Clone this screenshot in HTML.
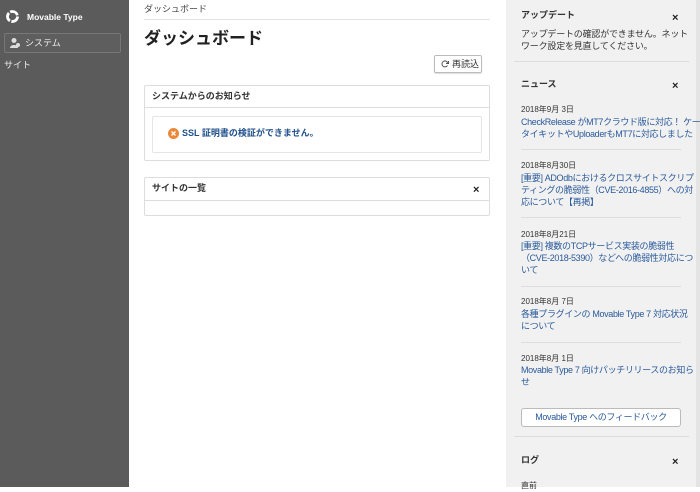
<!DOCTYPE html><html><head><meta charset="utf-8"><style>
*{margin:0;padding:0;box-sizing:border-box}
body{width:700px;height:487px;overflow:hidden;position:relative;background:#fff;font-family:"Liberation Sans","Noto Sans CJK JP",sans-serif;font-size:9px;color:#333}
.a{position:absolute;white-space:nowrap;line-height:12px}
.ln{position:absolute;height:1px;background:#ddd}
.lk{color:#2a5a9a;letter-spacing:-0.35px}
.x{font-weight:bold;font-size:11px;color:#222}
</style></head><body>
<div style="position:absolute;left:0;top:0;width:129px;height:487px;background:#5b5b5b"></div>
<svg style="position:absolute;left:5px;top:9px" width="15" height="15" viewBox="0 0 15 15"><circle cx="7.5" cy="7.5" r="5" fill="none" stroke="#fff" stroke-width="2.8" stroke-dasharray="9 1.5"/></svg>
<div class="a" style="left:27px;top:11px;color:#fff;font-weight:bold;font-size:8.5px">Movable Type</div>
<div style="position:absolute;left:4px;top:33px;width:117px;height:20px;border:1px solid #777;border-radius:2px;background:#5e5e5e"></div>
<svg style="position:absolute;left:9px;top:37px" width="12" height="12" viewBox="0 0 12 12"><circle cx="5" cy="3.5" r="2.5" fill="#ddd"/><path d="M1 11c0-4 8-4 8 0z" fill="#ddd"/><circle cx="9" cy="8" r="2" fill="#ddd"/></svg>
<div class="a" style="left:25px;top:37px;color:#eee">システム</div>
<div class="a" style="left:4px;top:59px;color:#eee">サイト</div>

<div class="a" style="left:144px;top:3px;color:#444">ダッシュボード</div>
<div class="ln" style="left:144px;top:19px;width:346px;background:#e3e3e3"></div>
<div class="a" style="left:144px;top:28px;font-size:17px;line-height:22px;font-weight:bold;color:#222">ダッシュボード</div>
<div style="position:absolute;left:434px;top:55px;width:48px;height:18px;border:1px solid #bbb;border-radius:2px;box-shadow:0 1px 1px #ddd"></div>
<svg style="position:absolute;left:441px;top:60px" width="8" height="8" viewBox="0 0 8 8"><path d="M6.8 3A3 3 0 1 0 6.5 5.5" fill="none" stroke="#555" stroke-width="1"/><path d="M7.5 1v2.5H5" fill="none" stroke="#555" stroke-width="1"/></svg>
<div class="a" style="left:452px;top:58px">再読込</div>

<div style="position:absolute;left:144px;top:85px;width:346px;height:76px;border:1px solid #ddd;border-radius:2px"></div>
<div class="ln" style="left:145px;top:107px;width:344px"></div>
<div class="a" style="left:152px;top:90px;font-weight:bold">システムからのお知らせ</div>
<div style="position:absolute;left:152px;top:116px;width:330px;height:37px;border:1px solid #e5e5e5;border-radius:2px"></div>
<svg style="position:absolute;left:168px;top:128px" width="11" height="11" viewBox="0 0 11 11"><circle cx="5.5" cy="5.5" r="5.5" fill="#e98a3a"/><path d="M3.5 3.5l4 4M7.5 3.5l-4 4" stroke="#fff" stroke-width="1.3"/></svg>
<div class="a" style="left:182px;top:127px;color:#1f4f8a;font-weight:bold">SSL 証明書の検証ができません。</div>

<div style="position:absolute;left:144px;top:177px;width:346px;height:39px;border:1px solid #ddd;border-radius:2px"></div>
<div class="ln" style="left:145px;top:200px;width:344px"></div>
<div class="a" style="left:152px;top:182px;font-weight:bold">サイトの一覧</div>
<div class="a x" style="left:473px;top:184px">×</div>

<div style="position:absolute;left:506px;top:0;width:194px;height:487px;background:#f1f1f1"></div>
<div style="position:absolute;left:696px;top:0;width:4px;height:487px;background:#e4e4e4"></div>
<div class="a" style="left:521px;top:9px;font-weight:bold">アップデート</div>
<div class="a x" style="left:672px;top:12px">×</div>
<div class="a" style="left:521px;top:28px;line-height:12px;letter-spacing:-0.2px">アップデートの確認ができません。ネット<br>ワーク設定を見直してください。</div>
<div class="ln" style="left:514px;top:61px;width:175px"></div>
<div class="a" style="left:521px;top:78px;font-weight:bold">ニュース</div>
<div class="a x" style="left:672px;top:80px">×</div>

<div class="a" style="left:521px;top:104px;font-size:8px">2018年9月 3日</div>
<div class="a lk" style="left:521px;top:116px">CheckRelease がMT7クラウド版に対応！ ケー<br>タイキットやUploaderもMT7に対応しました</div>
<div class="ln" style="left:521px;top:149px;width:160px"></div>
<div class="a" style="left:521px;top:160px;font-size:8px">2018年8月30日</div>
<div class="a lk" style="left:521px;top:172px">[重要] ADOdbにおけるクロスサイトスクリプ<br>ティングの脆弱性（CVE-2016-4855）への対<br>応について【再掲】</div>
<div class="ln" style="left:521px;top:217px;width:160px"></div>
<div class="a" style="left:521px;top:229px;font-size:8px">2018年8月21日</div>
<div class="a lk" style="left:521px;top:240px">[重要] 複数のTCPサービス実装の脆弱性<br>（CVE-2018-5390）などへの脆弱性対応につ<br>いて</div>
<div class="ln" style="left:521px;top:286px;width:160px"></div>
<div class="a" style="left:521px;top:296px;font-size:8px">2018年8月 7日</div>
<div class="a lk" style="left:521px;top:308px">各種プラグインの Movable Type 7 対応状況<br>について</div>
<div class="ln" style="left:521px;top:342px;width:160px"></div>
<div class="a" style="left:521px;top:353px;font-size:8px">2018年8月 1日</div>
<div class="a lk" style="left:521px;top:364px">Movable Type 7 向けパッチリリースのお知ら<br>せ</div>
<div style="position:absolute;left:521px;top:408px;width:160px;height:19px;border:1px solid #bbb;border-radius:3px;background:#fff"></div>
<div class="a lk" style="left:521px;top:411px;width:160px;text-align:center">Movable Type へのフィードバック</div>
<div class="ln" style="left:514px;top:436px;width:175px"></div>
<div class="a" style="left:521px;top:454px;font-weight:bold">ログ</div>
<div class="a x" style="left:672px;top:456px">×</div>
<div class="a" style="left:521px;top:480px;font-size:8px">直前</div>
</body></html>
